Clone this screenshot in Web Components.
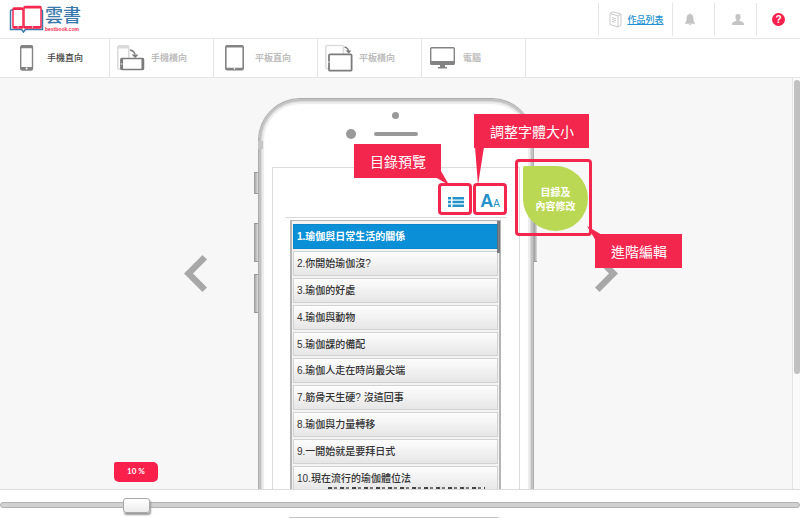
<!DOCTYPE html>
<html lang="zh-Hant">
<head>
<meta charset="utf-8">
<title>雲書</title>
<style>
html, body { height: 100%; }
body { margin: 0; background: #fff; font-family: "Liberation Sans", "Noto Sans CJK TC", sans-serif; font-size: 10px; color: #333; }
svg { display: block; }
</style>
</head>
<body>
<book-app></book-app>
<script>
const define = (name, html) => customElements.define(name, class extends HTMLElement {
  constructor() {
    super();
    const t = document.createElement('template');
    t.innerHTML = '<style>*{box-sizing:border-box}svg{display:block}button{font:inherit;color:inherit;background:none;border:0;padding:0;margin:0;cursor:pointer}</style>' + html;
    this.attachShadow({ mode: 'open' }).append(t.content.cloneNode(true));
  }
});

define('brand-logo', `
<style>
:host { display: flex; align-items: center; gap: 1px; padding-left: 9px; }
.name { font: 500 18px/20px "Liberation Sans", "Noto Sans CJK TC", sans-serif; color: #3a78ac; }
.site { font: bold 5px/6px "Liberation Sans", sans-serif; color: #f5274f; }
</style>
<svg width="35" height="28" viewBox="0 0 35 28" fill="none">
  <path d="M4 5H2.5Q1.500 5 1.500 6V24.500H12.500L14.500 27L16.500 24.500H33.500V6Q33.500 5 32 5" stroke="#3a78ac" stroke-width="1.500"/>
  <rect x="4" y="3" width="10" height="20" rx="1" stroke="#f5274f" stroke-width="1.500" fill="#fff"/>
  <path d="M4 22H14M4 4H14" stroke="#f5274f" stroke-width="2"/>
  <rect x="15" y="1.500" width="17" height="21.500" rx="1" stroke="#f5274f" stroke-width="1.500" fill="#fff"/>
  <path d="M15 22H32M15 2.500H32" stroke="#f5274f" stroke-width="2"/>
  <circle cx="9" cy="22" r=".7" fill="#fff"/><circle cx="23.500" cy="22" r=".7" fill="#fff"/>
</svg>
<div><div class="name">雲書</div><div class="site">bestbook.com</div></div>`);

define('top-bar', `
<style>
:host { display: flex; justify-content: space-between; height: 39px; flex: none; border-bottom: 1px solid #e6e6e6; }
nav { display: flex; padding: 3px 0 2px; }
nav > * { width: 42px; border-left: 1px solid #e6e6e6; display: flex; align-items: center; justify-content: center; }
.works { width: 74px; gap: 5px; padding-left: 2px; }
.bell { padding-right: 8px; }
.user { padding-left: 4px; }
.help { width: 44px; }
a { color: #2592cf; font: 500 9px/12px "Noto Sans CJK TC", sans-serif; }
button { width: 100%; height: 100%; display: flex; align-items: center; justify-content: center; }
.mark { width: 13px; height: 13px; border-radius: 50%; background: #f5204c; color: #fff; font: bold 10px/13px "Liberation Sans", sans-serif; }
</style>
<brand-logo></brand-logo>
<nav>
  <div class="works">
    <svg width="13" height="17" viewBox="0 0 13 17" fill="none" stroke="#c9c9c9"><path d="M1 2.500L3.500 .8L12 3V14L9 16L1 13.500ZM1 2.500L9 5V16M9 5L12 3M3 6.500L7 7.700M3 8.500L7 9.700M3 10.500L6 11.400"/></svg>
    <a href="#works">作品列表</a>
  </div>
  <div class="bell"><button aria-label="通知"><svg width="10" height="13" viewBox="0 0 10 13" fill="#c4c4c4"><path d="M4.300 1.200V.5H5.700V1.200C8 1.700 8.400 3.500 8.400 5.500C8.400 8 9 9 10 10V10.800H0V10C1 9 1.600 8 1.600 5.500C1.600 3.500 2 1.700 4.300 1.200ZM3.700 11.300H6.300C6 12.600 4 12.600 3.700 11.300Z"/></svg></button></div>
  <div class="user"><button aria-label="帳號"><svg width="12" height="11" viewBox="0 0 12 11" fill="#c4c4c4"><path d="M6 0C8 0 8.800 1.400 8.600 3.200C8.500 4.800 7.700 5.500 7.400 6.200C7.300 7.300 12 7.300 12 10V11H0V10C0 7.300 4.700 7.300 4.600 6.200C4.300 5.500 3.500 4.800 3.400 3.200C3.200 1.400 4 0 6 0Z"/></svg></button></div>
  <div class="help"><button aria-label="說明"><span class="mark">?</span></button></div>
</nav>`);

define('device-tab', `
<style>
:host { display: block; width: 104px; border-right: 1px solid #e6e6e6; color: #bdbdbd; }
:host([active]) { width: 110px; padding-left: 6px; color: #444; }
:host { box-sizing: border-box; }
button { width: 100%; height: 100%; display: grid; grid-template-columns: 41px 1fr; align-items: center; text-align: left; font: bold 9px/12px "Noto Sans CJK TC", sans-serif; }
:host([active]) button { font-weight: 500; }
.icon { display: flex; justify-content: center; }
</style>
<button><span class="icon"><slot name="icon"></slot></span><slot></slot></button>`);

define('device-tabs', `
<style>
:host { display: flex; height: 39px; flex: none; border-bottom: 1px solid #e6e6e6; }
</style>
<device-tab active><svg slot="icon" width="14" height="26" viewBox="0 0 14 26"><rect x=".7" y=".7" width="11.800" height="24.300" rx="1.500" fill="#fff" stroke="#838383" stroke-width="1.400"/><path d="M1 1.800H12.500M1 23.500H12.500" stroke="#838383" stroke-width="2.800"/><circle cx="6.600" cy="23.500" r="1" fill="#fff"/></svg>手機直向</device-tab>
<device-tab><svg slot="icon" width="28" height="26" viewBox="0 0 28 26" fill="none"><rect x=".8" y="1" width="11" height="23" rx="1" stroke="#d9d9d9" stroke-width="1.500"/><path d="M1 2H12" stroke="#d9d9d9" stroke-width="3"/><rect x="4" y="13.500" width="22.500" height="11" rx="1" fill="#fff" stroke="#7b7b7b" stroke-width="1.500"/><path d="M4.800 13.500V24.500M25.700 13.500V24.500" stroke="#7b7b7b" stroke-width="2.500"/><circle cx="4.700" cy="19" r=".8" fill="#fff"/><path d="M13 5Q18 6 18.200 11M15.500 9.500L18.300 12L20.500 9.500" stroke="#7b7b7b" stroke-width="1.400"/></svg>手機橫向</device-tab>
<device-tab><svg slot="icon" width="19" height="26" viewBox="0 0 19 26"><rect x=".8" y=".8" width="17.400" height="24" rx="1.500" fill="#fff" stroke="#838383" stroke-width="1.600"/><path d="M1 1.500H18M1 23.800H18" stroke="#838383" stroke-width="2"/><circle cx="9.500" cy="23.800" r=".8" fill="#fff"/></svg>平板直向</device-tab>
<device-tab><svg slot="icon" width="28" height="28" viewBox="0 0 28 28" fill="none"><rect x=".8" y="1.500" width="17.500" height="23" rx="1" stroke="#dcdcdc" stroke-width="1.500"/><rect x="4" y="10.300" width="22.600" height="16.400" rx="1" fill="#fff" stroke="#7b7b7b" stroke-width="1.800"/><circle cx="4" cy="18" r=".7" fill="#fff"/><path d="M19.500 3Q23.500 4 23.700 8M21.500 6.500L23.800 8.500L25.500 6.500" stroke="#7b7b7b" stroke-width="1.300"/></svg>平板橫向</device-tab>
<device-tab><svg slot="icon" width="25" height="22" viewBox="0 0 25 22"><rect x=".7" y=".7" width="23.600" height="16.500" rx="1" fill="#fff" stroke="#838383" stroke-width="1.400"/><path d="M.5 14H24.500V17.500H.5ZM10 17.500H15V20H17V21.500H8V20H10Z" fill="#838383"/></svg>電腦</device-tab>`);

define('call-out', `
<style>
:host { position: absolute; z-index: 2; box-sizing: border-box; height: 34px; padding: 0 15px 0 16px; background: #f3264e; color: #fff; font: 14px/35px "Noto Sans CJK TC", sans-serif; white-space: nowrap; }
:host::after { content: ""; position: absolute; inset: -40px; background: #f3264e; clip-path: var(--tail); }
</style>
<slot></slot>`);

define('chapter-item', `
<style>
:host { display: block; min-height: 0; border: 1px solid #d2d2d2; background: linear-gradient(#fdfdfd, #e6e6e6); color: #333; font-weight: 500; }
:host([selected]) { background: #0b90d7; border-color: #0b86ca; color: #fff; font-weight: bold; }
button { width: 100%; height: 100%; padding: 1px 3px 0; text-align: left; white-space: nowrap; font-size: 10px; line-height: 12px; }
</style>
<button><slot></slot></button>`);

define('chapter-list', `
<style>
:host { display: block; position: relative; margin: 2px 6px 0 5px; padding: 3px 1px 0; border: solid #b5b5b5; border-width: 1px 2px 0; height: 400px; background: #f3f3f3; }
.rows { display: grid; grid-auto-rows: 1fr; gap: 2px; height: 267px; }
.bar { position: absolute; top: 0; right: -1px; width: 3px; height: 32px; background: #666b70; opacity: .85; }
.under { position: absolute; top: 266px; left: 36px; width: 157px; height: 2px; background: repeating-linear-gradient(90deg, #444 0 4px, #ddd 4px 6px, #777 6px 9px, #eee 9px 12px); }
</style>
<div class="rows">
<chapter-item selected>1.瑜伽與日常生活的關係</chapter-item>
<chapter-item>2.你開始瑜伽沒?</chapter-item>
<chapter-item>3.瑜伽的好處</chapter-item>
<chapter-item>4.瑜伽與動物</chapter-item>
<chapter-item>5.瑜伽課的備配</chapter-item>
<chapter-item>6.瑜伽人走在時尚最尖端</chapter-item>
<chapter-item>7.筋骨天生硬? 沒這回事</chapter-item>
<chapter-item>8.瑜伽與力量轉移</chapter-item>
<chapter-item>9.一開始就是要拜日式</chapter-item>
<chapter-item>10.現在流行的瑜伽體位法</chapter-item>
</div>
<div class="bar"></div>
<div class="under"></div>`);

define('phone-preview', `
<style>
:host { display: block; position: relative; width: 276px; height: 560px; }
.body { height: 100%; padding: 68px 13px 0; background: #fff; border-radius: 42px; border: 1px solid #adadad; box-shadow: inset 0 0 0 2px #c2c2c2, inset 0 0 0 3px #d8d8d8, inset 0 0 1px 5px #ececec; }
.screen { height: 440px; padding: 15px 12px 0; border: 1px solid #dcdcdc; background: #fff; }
.tools { display: flex; justify-content: flex-end; gap: 1px; padding-bottom: 2px; border-bottom: 1px solid #d8d8d8; }
.tools button { width: 34px; height: 32px; border: 3px solid #f3264e; border-radius: 4px; display: flex; align-items: center; justify-content: center; }
.tools button:first-child { padding: 5px 0 0 2px; }
.aa { color: #2591cb; font: bold 18px/18px "Liberation Sans", sans-serif; padding-top: 4px; }
.aa small { font: 10px/10px "Liberation Sans", sans-serif; }
.dot, .speaker, .side, .band { position: absolute; background: #999; }
.cam { left: 134px; top: 14px; width: 7px; height: 7px; border-radius: 50%; }
.sensor { left: 88px; top: 31px; width: 10px; height: 10px; border-radius: 50%; }
.speaker { left: 116px; top: 34px; width: 44px; height: 4px; border-radius: 2px; }
.side { left: -4px; width: 4px; height: 39px; background: linear-gradient(90deg, #999, #ddd); border: solid #999; border-width: 1px 0; }
.s1 { top: 74px; height: 22px; } .s2 { top: 125px; } .s3 { top: 176px; }
.s4 { left: 276px; top: 125px; width: 3px; }
.band { left: 0; top: 43px; width: 5px; height: 8px; background: #c6c6c6; }
.edit { position: absolute; left: 257px; top: 61px; width: 77px; height: 77px; padding: 4px 1px 2px 5px; border: 3px solid #f3264e; border-radius: 4px; }
.edit button { width: 65px; height: 65px; background: #bad854; border-radius: 2px 50% 50% 50%; color: #fff; font: bold 10px/14px "Noto Sans CJK TC", sans-serif; }
.toc { left: 96px; top: 46px; --tail: polygon(121px 73px, 121px 66px, 127px 67px, 135px 81px); }
.size { left: 216px; top: 16px; --tail: polygon(41px 73px, 50px 73px, 44px 111px); }
.adv { left: 337px; top: 136px; --tail: polygon(32px 32px, 47px 41px, 41px 47px); }
</style>
<div class="body"><div class="screen">
  <div class="tools">
    <button aria-label="目錄預覽"><svg width="16" height="10" viewBox="0 0 16 10" fill="#2591cb"><path d="M0 0H3V2.400H0ZM0 3.800H3V6.200H0ZM0 7.600H3V10H0ZM4.500 0H16V2.400H4.500ZM4.500 3.800H16V6.200H4.500ZM4.500 7.600H16V10H4.500Z"/></svg></button>
    <button aria-label="調整字體大小"><span class="aa">A<small>A</small></span></button>
  </div>
  <chapter-list></chapter-list>
</div></div>
<i class="dot cam"></i><i class="dot sensor"></i><i class="speaker"></i>
<i class="side s1"></i><i class="side s2"></i><i class="side s3"></i><i class="side s4"></i><i class="band"></i>
<div class="edit"><button>目錄及<br>內容修改</button></div>
<call-out class="toc">目錄預覽</call-out>
<call-out class="size">調整字體大小</call-out>
<call-out class="adv">進階編輯</call-out>`);

define('preview-stage', `
<style>
:host { display: flex; flex: 1; min-height: 0; overflow: hidden; position: relative; background: #f7f7f7; }
.canvas { flex: 1; display: grid; grid-template-columns: 1fr auto 1fr; align-items: start; padding-top: 20px; }
.arrow { margin-top: 157px; }
.prev { justify-self: end; margin-right: 51px; }
.next { justify-self: start; margin-left: 61px; }
phone-preview { z-index: 1; }
.scroll { width: 8px; padding: 2px 0 0 1px; background: #fafafa; border-left: 1px solid #e4e4e4; }
.thumb { height: 72%; border-radius: 3px; background: #c1c1c1; }
.percent { position: absolute; left: 114px; bottom: 7px; width: 44px; height: 20px; border-radius: 2px 5px 5px 5px; background: #f9204c; color: #fff; font: bold 8px/19px Lato, sans-serif; text-align: center; }
</style>
<div class="canvas">
  <button class="arrow prev" aria-label="上一頁"><svg width="23" height="37" viewBox="0 0 23 37" fill="#a8a8a8"><path d="M18.500 0L23 4.500L9 18.500L23 32.500L18.500 37L0 18.500Z"/></svg></button>
  <phone-preview></phone-preview>
  <button class="arrow next" aria-label="下一頁"><svg width="23" height="37" viewBox="0 0 23 37" fill="#a8a8a8"><path d="M4.500 0L0 4.500L14 18.500L0 32.500L4.500 37L23 18.500Z"/></svg></button>
</div>
<div class="scroll"><div class="thumb"></div></div>
<output class="percent">10 %</output>`);

define('zoom-bar', `
<style>
:host { display: flex; flex-direction: column; flex: none; box-sizing: border-box; height: 29px; border-top: 1px solid #dcdcdc; background: #fff; overflow: hidden; }
input { appearance: none; width: 100%; height: 17px; margin: 8px 0 2px; background: none; flex: none; }
input::-webkit-slider-runnable-track { height: 6px; margin-bottom: 4px; background: #d0d0d0; border: 1px solid #b2b2b2; border-radius: 3px; }
input::-webkit-slider-thumb { appearance: none; width: 27px; height: 15px; margin-top: -5px; background: linear-gradient(#fff, #ececec); border: 1px solid #a8a8a8; border-radius: 3px; box-shadow: 1px 2px 2px #999; }
.edge { width: 210px; height: 1px; flex: none; background: #c4c4c4; margin-left: calc(50% - 111px); }
</style>
<input type="range" min="0" max="63" value="10" aria-label="進度">
<div class="edge"></div>`);

define('book-app', `
<style>
:host { display: flex; flex-direction: column; height: 100vh; overflow: hidden; }
</style>
<top-bar></top-bar>
<device-tabs></device-tabs>
<preview-stage></preview-stage>
<zoom-bar></zoom-bar>`);
</script>
</body>
</html>
